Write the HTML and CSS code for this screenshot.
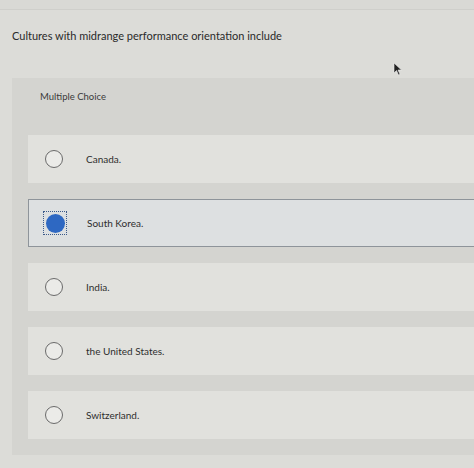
FILE: index.html
```html
<!DOCTYPE html>
<html>
<head>
<meta charset="utf-8">
<link rel="stylesheet" href="styles.css">
</head>
<body>
<div class="topbar"></div>
<div class="question">Cultures with midrange performance orientation include</div>
<div class="panel">
  <div class="mc">Multiple Choice</div>
  <div class="options">
    <div class="opt"><span class="radio"></span><span class="label">Canada.</span></div>
    <div class="opt selected"><span class="focus"><span class="radio on"></span></span><span class="label">South Korea.</span></div>
    <div class="opt"><span class="radio"></span><span class="label">India.</span></div>
    <div class="opt"><span class="radio"></span><span class="label">the United States.</span></div>
    <div class="opt"><span class="radio"></span><span class="label">Switzerland.</span></div>
  </div>
</div>
<svg class="cursor" width="10" height="14" viewBox="0 0 10 14"><path d="M1 1 L1 11 L3.5 8.5 L5.5 13 L7 12.3 L5 8 L8.5 8 Z" fill="#222" stroke="#eee" stroke-width="0.6"/></svg>
</body>
</html>
```
FILE: styles.css
```css
html, body { margin: 0; padding: 0; }
body {
  background: #dcdcd8;
  font-family: "Lato", "Open Sans", sans-serif;
  color: #333;
  width: 474px;
  height: 468px;
  overflow: hidden;
  position: relative;
}
.topbar {
  height: 9px;
  border-bottom: 1px solid #cfcfcb;
  background: #d9d9d5;
}
.question {
  font-size: 11px;
  padding: 19px 0 0 12px;
  height: 49px;
  color: #2a2a2a;
}
.panel {
  margin-left: 12px;
  background: #d4d4d0;
  padding: 13px 0 16px 16px;
}
.mc {
  font-size: 9.5px;
  padding-left: 12px;
  height: 44px;
  color: #3a3a3a;
}
.options {
  display: flex;
  flex-direction: column;
  gap: 16px;
}
.opt {
  height: 48px;
  background: #e1e1dd;
  display: flex;
  align-items: center;
  box-sizing: border-box;
}
.opt.selected {
  background: #dde0e1;
  border: 1px solid #8e949a;
  border-right: none;
}
.radio {
  width: 18px;
  height: 18px;
  border: 1.2px solid #6a6a6a;
  border-radius: 50%;
  box-sizing: border-box;
  margin-left: 17px;
  flex: none;
  background: #ebebe8;
}
.focus {
  margin-left: 14px;
  width: 24px;
  height: 24px;
  border: 1.2px dotted #3b5a8a;
  box-sizing: border-box;
  display: flex;
  align-items: center;
  justify-content: center;
  flex: none;
}
.radio.on {
  margin-left: 0;
  width: 19px;
  height: 19px;
  border: none;
  background: #2e68c2;
}
.label {
  font-size: 10px;
  margin-left: 23px;
  color: #2e2e2e;
}
.selected .label { margin-left: 20px; }
.cursor {
  position: absolute;
  left: 393px;
  top: 62px;
}
```
